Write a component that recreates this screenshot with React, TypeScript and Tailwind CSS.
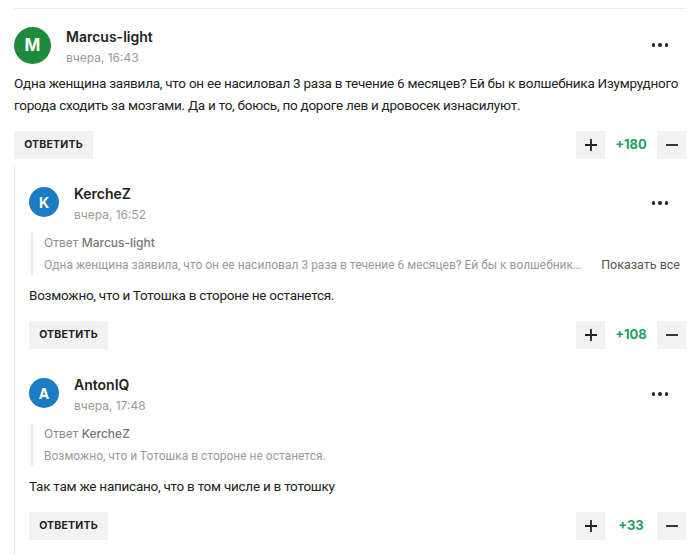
import React from 'react';

type Quote = { author: string; text: string; full?: boolean };

const Dots: React.FC = () => (
    <button className="mr-[18px] flex h-[20px] items-center justify-center gap-[3px]">
        <span className="h-[3.5px] w-[3.5px] rounded-full bg-[#222]" />
        <span className="h-[3.5px] w-[3.5px] rounded-full bg-[#222]" />
        <span className="h-[3.5px] w-[3.5px] rounded-full bg-[#222]" />
    </button>
);

const Votes: React.FC<{ score: string }> = ({ score }) => (
    <div className="flex items-center">
        <button className="flex h-[28px] w-[29px] items-center justify-center bg-[#f2f2f2]">
            <svg width="14" height="14" viewBox="0 0 14 14">
                <path d="M7 1v12M1 7h12" stroke="#222" strokeWidth="1.8" />
            </svg>
        </button>
        <span className="w-[52px] text-center text-[13px] font-bold text-[#1f9d66]" style={{ fontFamily: 'Inter, sans-serif' }}>
            {score}
        </span>
        <button className="flex h-[28px] w-[29px] items-center justify-center bg-[#f2f2f2]">
            <svg width="14" height="14" viewBox="0 0 14 14">
                <path d="M1 7h12" stroke="#222" strokeWidth="1.8" />
            </svg>
        </button>
    </div>
);

const Footer: React.FC<{ score: string }> = ({ score }) => (
    <div className="flex items-center justify-between">
        <button
            className="h-[28px] w-[79px] bg-[#f2f2f2] text-[10.5px] font-bold tracking-[0.2px] text-[#222]"
            style={{ fontFamily: 'Inter, sans-serif' }}
        >
            ОТВЕТИТЬ
        </button>
        <Votes score={score} />
    </div>
);

const Comment: React.FC<{
    letter: string;
    color: string;
    name: string;
    time: string;
    size: 'lg' | 'sm';
    quote?: Quote;
    text: React.ReactNode;
    score: string;
}> = ({ letter, color, name, time, size, quote, text, score }) => {
    const lg = size === 'lg';
    return (
        <div>
            <div className={lg ? 'flex h-[45px] items-start justify-between' : 'flex h-[49px] items-start justify-between'}>
                <div className="flex items-start">
                    <div
                        className={
                            lg
                                ? 'flex h-[37px] w-[37px] items-center justify-center rounded-full text-[17px] font-bold text-white'
                                : 'mt-[3px] flex h-[30px] w-[30px] items-center justify-center rounded-full text-[14px] font-bold text-white'
                        }
                        style={{ backgroundColor: color, fontFamily: 'Inter, sans-serif' }}
                    >
                        {letter}
                    </div>
                    <div className="ml-[15px]">
                        <div className="text-[14px] font-semibold leading-[20px] text-[#222]" style={{ fontFamily: 'Inter, sans-serif' }}>
                            {name}
                        </div>
                        <div className="mt-[1px] text-[12px] leading-[20px] text-[#9a9a9a]" style={{ fontFamily: 'Inter, sans-serif' }}>
                            {time}
                        </div>
                    </div>
                </div>
                <div className={lg ? 'mt-[8px]' : 'mt-[9px]'}>
                    <Dots />
                </div>
            </div>
            {quote && (
                <div className="mb-[9px] ml-[2px] flex flex-col gap-[2px] border-l-2 border-[#ececec] pl-[11px]">
                    <div className="text-[12px] leading-[20px] text-[#8c8c8c]" style={{ fontFamily: 'Inter, sans-serif' }}>
                        Ответ <span className="font-medium text-[#777]">{quote.author}</span>
                    </div>
                    <div
                        className="flex items-center justify-between gap-[20px] text-[12px] leading-[20px]"
                        style={{ fontFamily: 'Roboto, sans-serif' }}
                    >
                        <span className="min-w-0 truncate text-[#9a9a9a]">{quote.text}</span>
                        {quote.full && (
                            <span className="mr-[6px] shrink-0 whitespace-nowrap text-[12.5px] text-[#555]">Показать все</span>
                        )}
                    </div>
                </div>
            )}
            <div className="text-[13.5px] leading-[22px] tracking-[-0.25px] text-[#222]" style={{ fontFamily: 'Roboto, sans-serif' }}>
                {text}
            </div>
            <div className="mt-[15px]">
                <Footer score={score} />
            </div>
        </div>
    );
};

const App: React.FC = () => {
    return (
        <div className="h-[555px] w-[700px] overflow-hidden bg-white px-[14px] pt-[8px]">
            <div className="border-t border-[#ececec] pt-[18px]">
                <Comment
                    letter="M"
                    color="#1e8a3c"
                    name="Marcus-light"
                    time="вчера, 16:43"
                    size="lg"
                    text="Одна женщина заявила, что он ее насиловал 3 раза в течение 6 месяцев? Ей бы к волшебника Изумрудного города сходить за мозгами. Да и то, боюсь, по дороге лев и дровосек изнасилуют."
                    score="+180"
                />
                <div className="mt-[7px] border-l border-[#ececec] pl-[14px] pt-[18px]">
                    <Comment
                        letter="K"
                        color="#1b7cc4"
                        name="KercheZ"
                        time="вчера, 16:52"
                        size="sm"
                        quote={{
                            author: 'Marcus-light',
                            text: 'Одна женщина заявила, что он ее насиловал 3 раза в течение 6 месяцев? Ей бы к волшебник...',
                            full: true,
                        }}
                        text="Возможно, что и Тотошка в стороне не останется."
                        score="+108"
                    />
                    <div className="pt-[26px]">
                        <Comment
                            letter="A"
                            color="#1b7cc4"
                            name="AntonIQ"
                            time="вчера, 17:48"
                            size="sm"
                            quote={{
                                author: 'KercheZ',
                                text: 'Возможно, что и Тотошка в стороне не останется.',
                            }}
                            text="Так там же написано, что в том числе и в тотошку"
                            score="+33"
                        />
                    </div>
                    <div className="h-[40px]" />
                </div>
            </div>
        </div>
    );
};

export default App;
